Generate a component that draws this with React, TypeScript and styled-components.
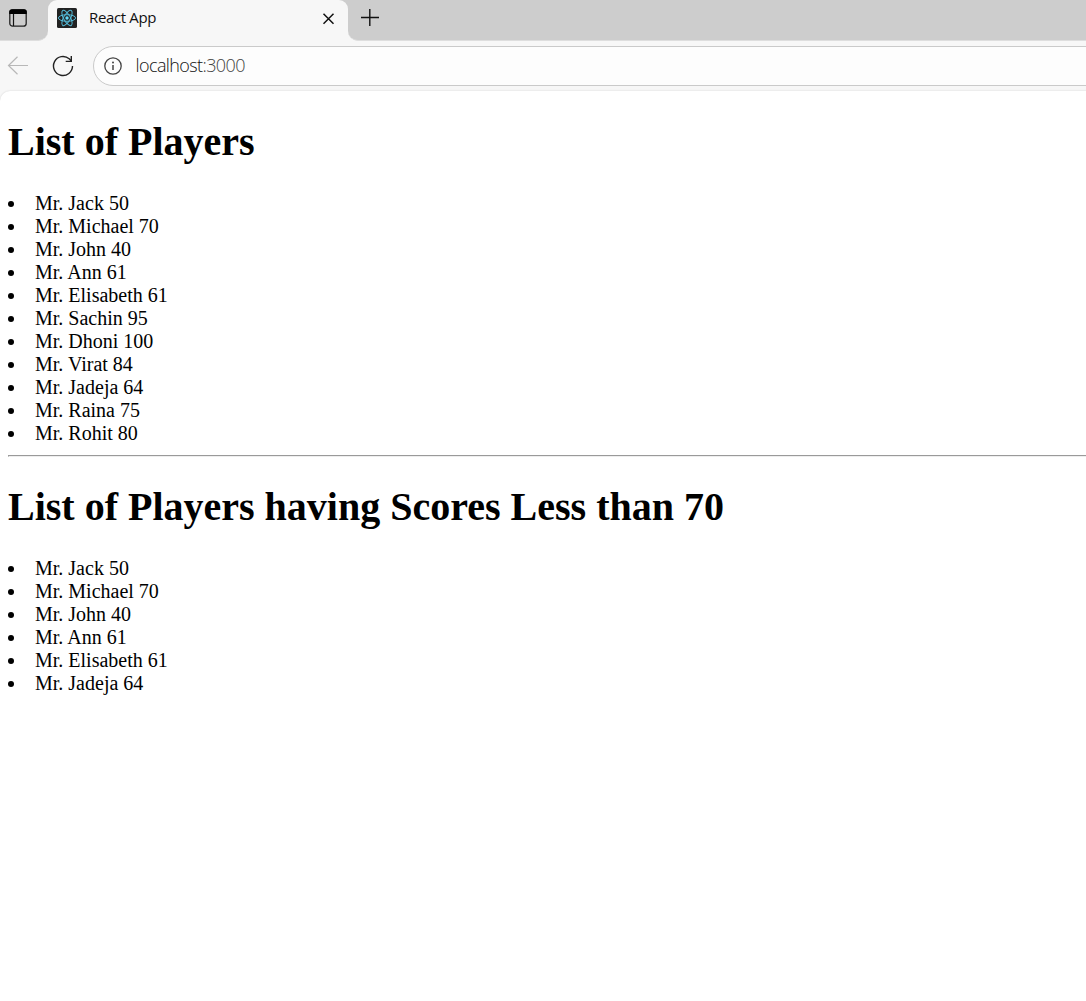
import React from 'react';
import styled, { createGlobalStyle } from 'styled-components';

const GlobalStyle = createGlobalStyle`
  html, body { margin: 0; background: #fff; overflow: hidden; }
  * { box-sizing: border-box; }
  svg { display: block; flex: none; }
`;

const Window = styled.div`
  height: 1001px;
  overflow: hidden;
  background: #f7f7f7;
`;

const TabStrip = styled.div`
  display: flex;
  height: 41px;
  background: #f7f7f7;
`;

const StripStart = styled.div`
  width: 48px;
  height: 41px;
  background: #cdcdcd;
  border-bottom: 1px solid #dedede;
  border-bottom-right-radius: 10px;
  padding: 9px 0 0 9px;
`;

const TabWell = styled.div`
  width: 300px;
  background: #cdcdcd;
  height: 41px;
`;

const Tab = styled.div`
  display: flex;
  align-items: center;
  height: 41px;
  padding: 0 13px 5px 9px;
  background: #f7f7f7;
  border-radius: 9px 9px 0 0;
`;

const TabTitle = styled.span`
  flex: 1;
  margin: 0 0 2px 12px;
  font: 15px/20px 'Open Sans', 'Noto Sans', sans-serif;
  letter-spacing: -0.35px;
  color: #111;
`;

const StripEnd = styled.div`
  flex: 1;
  height: 41px;
  background: #cdcdcd;
  border-bottom: 1px solid #dedede;
  border-bottom-left-radius: 10px;
  padding: 8px 0 0 12px;
`;

const Toolbar = styled.div`
  display: flex;
  align-items: center;
  height: 50px;
  padding-left: 7px;
`;

const ToolButton = styled.span<{ $gap: number }>`
  display: flex;
  margin-right: ${(p) => p.$gap}px;
`;

const AddressBar = styled.div`
  display: flex;
  align-items: center;
  flex: 1;
  height: 40px;
  margin-right: -30px;
  padding-left: 9px;
  border: 1px solid #cacaca;
  border-radius: 20px;
  background: #fdfdfd;
`;

const Address = styled.span`
  margin: 0 0 2px 12.5px;
  font: 350 18px/24px 'Open Sans', 'Noto Sans', sans-serif;
  letter-spacing: -0.6px;
  color: #111;
`;

const Port = styled.span`
  color: #444;
`;

const Page = styled.main`
  display: flow-root;
  height: 910px;
  margin-right: -20px;
  padding: 1px 8px 0;
  background: #fff;
  border-top-left-radius: 10px;
  box-shadow: 0 0 2px rgba(0, 0, 0, 0.16);
  font-family: 'Liberation Serif', 'Times New Roman', serif;
  font-size: 20px;
  line-height: 23px;
  color: #000;
`;

const Heading = styled.h1`
  margin: 27px 0;
  font-size: 40px;
  line-height: 46px;
  font-weight: bold;
`;

const Player = styled.li`
  list-style-position: inside;
`;

const Divider = styled.hr`
  margin: 10px 0;
  border: 1px solid;
  border-color: #9a9a9a #eee #eee #9a9a9a;
`;

const players = [
  { name: 'Mr. Jack', score: 50 },
  { name: 'Mr. Michael', score: 70 },
  { name: 'Mr. John', score: 40 },
  { name: 'Mr. Ann', score: 61 },
  { name: 'Mr. Elisabeth', score: 61 },
  { name: 'Mr. Sachin', score: 95 },
  { name: 'Mr. Dhoni', score: 100 },
  { name: 'Mr. Virat', score: 84 },
  { name: 'Mr. Jadeja', score: 64 },
  { name: 'Mr. Raina', score: 75 },
  { name: 'Mr. Rohit', score: 80 },
];

type PlayerData = { name: string; score: number };

const PlayerList = ({ items }: { items: PlayerData[] }) => (
  <>
    {items.map((p) => (
      <Player key={p.name}>{`${p.name} ${p.score}`}</Player>
    ))}
  </>
);

const TabActionsIcon = () => (
  <svg width="18" height="18" viewBox="0 0 18 18" fill="none">
    <rect x="0.8" y="1" width="16.4" height="16.2" rx="2.8" stroke="#222" strokeWidth="1.3" />
    <path d="M.2 5V3Q.2.3 3 .3h12Q17.8.3 17.8 3v2Z" fill="#000" />
    <path d="M4.5 5v12" stroke="#111" strokeWidth="1.2" />
  </svg>
);

const ReactIcon = () => (
  <svg width="20" height="20" viewBox="0 0 20 20" fill="none">
    <rect width="20" height="20" rx="1.5" fill="#222" />
    <g stroke="#53b9d6" strokeWidth="1">
      <ellipse cx="10" cy="10" rx="8.6" ry="3.3" />
      <ellipse cx="10" cy="10" rx="8.6" ry="3.3" transform="rotate(60 10 10)" />
      <ellipse cx="10" cy="10" rx="8.6" ry="3.3" transform="rotate(120 10 10)" />
    </g>
    <circle cx="10" cy="10" r="1.7" fill="#61dafb" />
  </svg>
);

const CloseIcon = () => (
  <svg width="13" height="13" viewBox="0 0 13 13">
    <path d="M1.5 1.8l10 10M11.5 1.8l-10 10" stroke="#111" strokeWidth="1.5" />
  </svg>
);

const PlusIcon = () => (
  <svg width="20" height="20" viewBox="0 0 20 20">
    <path d="M1 9.5h18M9.8 1v17" stroke="#111" strokeWidth="1.4" />
  </svg>
);

const BackIcon = () => (
  <svg width="22" height="20" viewBox="0 0 22 20" fill="none">
    <path d="M21 9.5H1.5M10.5.8L1.5 9.5l9 8.7" stroke="#b8b8b8" strokeWidth="1.2" />
  </svg>
);

const ReloadIcon = () => (
  <svg width="22" height="22" viewBox="0 0 22 22" fill="none">
    <path d="M20.5 11A9.5 9.5 0 1 1 17.2 3.8L19.4 6" stroke="#222" strokeWidth="1.4" />
    <path d="M19.3 1v5.4h-5.6" stroke="#222" strokeWidth="1.4" />
  </svg>
);

const InfoIcon = () => (
  <svg width="20" height="20" viewBox="0 0 20 20" fill="none">
    <circle cx="10" cy="10" r="8.2" stroke="#444" strokeWidth="1.3" />
    <path d="M10 9v5" stroke="#444" strokeWidth="1.5" />
    <circle cx="10" cy="6.6" r="1" fill="#444" />
  </svg>
);

export default function App() {
  return (
    <Window>
      <GlobalStyle />
      <TabStrip>
        <StripStart>
          <TabActionsIcon />
        </StripStart>
        <TabWell>
          <Tab>
            <ReactIcon />
            <TabTitle>React App</TabTitle>
            <CloseIcon />
          </Tab>
        </TabWell>
        <StripEnd>
          <PlusIcon />
        </StripEnd>
      </TabStrip>
      <Toolbar>
        <ToolButton $gap={23}>
          <BackIcon />
        </ToolButton>
        <ToolButton $gap={19}>
          <ReloadIcon />
        </ToolButton>
        <AddressBar>
          <InfoIcon />
          <Address>
            localhost<Port>:3000</Port>
          </Address>
        </AddressBar>
      </Toolbar>
      <Page>
        <Heading>List of Players</Heading>
        <PlayerList items={players} />
        <Divider />
        <Heading>List of Players having Scores Less than 70</Heading>
        <PlayerList items={players.filter((p) => p.score <= 70)} />
      </Page>
    </Window>
  );
}
